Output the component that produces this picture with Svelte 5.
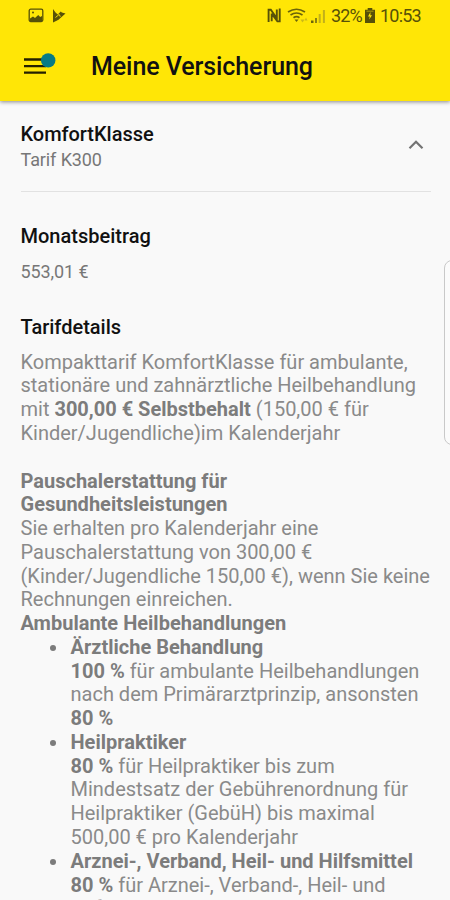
<script>
  const items = [
    { title: 'Ärztliche Behandlung', rate: '100 %', lines: [' für ambulante Heilbehandlungen', 'nach dem Primärarztprinzip, ansonsten'], end: '80 %' },
    { title: 'Heilpraktiker', rate: '80 %', lines: [' für Heilpraktiker bis zum', 'Mindestsatz der Gebührenordnung für', 'Heilpraktiker (GebüH) bis maximal', '500,00 € pro Kalenderjahr'] },
    { title: 'Arznei-, Verband, Heil- und Hilfsmittel', rate: '80 %', lines: [' für Arznei-, Verband-, Heil- und', 'Hilfsmittel bis'] }
  ];
</script>

<div class="screen">
  <header>
    <div class="status">
      <svg class="left" width="42" height="18" viewBox="0 0 42 18">
        <rect x="2.2" y="2.2" width="13.6" height="12.4" rx="1.5" fill="none" stroke="#575108" stroke-width="1.3" />
        <path d="M3 11.500l3-2 2 1.500 3.200-3 2 2 1.800-1v5.500H3z" fill="#575108" /><circle cx="6" cy="5.500" r="1" fill="#575108" />
        <path d="M26 2l2.500 3.400 2.300 2 3-2.800 1 1 3.700.9-7 6.300-5.500 2.600z" fill="#575108" />
        <path d="M28.500 10.500l3-2.500 2 1.500M31.500 7l1.500 1.500" stroke="#ffe606" stroke-width=".9" fill="none" />
      </svg>
      <div class="right">
        <svg width="62" height="18" viewBox="0 0 62 18">
          <path d="M2.600 15V2.800h2.200l6 8.400V2.500M5.700 6.500v7.700M5.700 6.800l5.700 7.600h2.300V1.500" fill="none" stroke="#575108" stroke-width="1.900" />
          <g fill="none" stroke="#6b640a" stroke-width="1.700"><path d="M22 5q8.500-5.500 17 0M24.500 8q6-4 12 0M27.500 10.800q3-2.200 6 0" /></g>
          <path d="M28.500 12.500h4L30.500 15z" fill="#6b640a" />
          <path d="M34.500 12.500l2 3 2-3zM38.500 13.500l1.500-3 1.500 3z" fill="#cbb918" />
          <path d="M45 16v-2.500h2.500V16z" fill="#6b640a" /><path d="M52.700 16V7h2v9zM56.900 16V3h2v13z" fill="#c2b01a" />
          <path d="M49 16v-5h2v5z" fill="#8d8210" />
        </svg>
        <span class="pct">32%</span>
        <svg class="bat" width="12" height="17" viewBox="0 0 12 17"><path d="M3.700 1h4.600v1.800H11V16H1V2.800h2.700z" fill="#575108" /><path d="M6.500 5L4 9.500h1.800l-.6 3 2.800-4.200H6.300z" fill="#ffe606" /><path d="M2.500 4.200h7" stroke="#a99c0c" /></svg>
        <span class="time">10:53</span>
      </div>
    </div>
    <div class="bar">
      <svg width="36" height="28" viewBox="0 0 36 28">
        <path d="M1 7.500h22M1 14.200h22M1 20.700h22" stroke="#242100" stroke-width="2.300" />
        <circle cx="25.200" cy="8.400" r="7.200" fill="#087b85" />
      </svg>
      <h1>Meine Versicherung</h1>
    </div>
  </header>

  <main>
    <section class="tariff">
      <div><h2 class="name">KomfortKlasse</h2><p class="sub">Tarif K300</p></div>
      <svg width="18" height="12" viewBox="0 0 18 12"><path d="M2.500 9.300L9 2.800l6.500 6.500" fill="none" stroke="#747474" stroke-width="2.200" /></svg>
    </section>
    <h2 class="month">Monatsbeitrag</h2>
    <p class="price">553,01 €</p>
    <h2 class="det">Tarifdetails</h2>
    <div class="body">
      <p>Kompakttarif KomfortKlasse für ambulante,<br />stationäre und zahnärztliche Heilbehandlung<br />mit <b>300,00 € Selbstbehalt</b> (150,00 € für<br />Kinder/Jugendliche)im Kalenderjahr</p>
      <p class="gap"><b>Pauschalerstattung für<br />Gesundheitsleistungen</b><br />Sie erhalten pro Kalenderjahr eine<br />Pauschalerstattung von 300,00 €<br />(Kinder/Jugendliche 150,00 €), wenn Sie keine<br />Rechnungen einreichen.<br /><b>Ambulante Heilbehandlungen</b></p>
      <ul>
        {#each items as item}
          <li><b>{item.title}</b><br /><b>{item.rate}</b>{#each item.lines as line, i}{#if i > 0}<br />{/if}{line}{/each}{#if item.end}<br /><b>{item.end}</b>{/if}</li>
        {/each}
      </ul>
    </div>
  </main>
  <aside></aside>
</div>

<style>
  :global(body) { background: #f9f9f9; overflow: hidden; }
  .screen { position: relative; width: 450px; height: 900px; overflow: hidden; background: #f9f9f9; font-family: Roboto, sans-serif; color: #111; }
  h1, h2, p, ul { margin: 0; padding: 0; }
  header { height: 101px; background: #ffe606; box-shadow: 0 1px 4px rgba(0, 0, 0, .45); }
  .status { display: flex; justify-content: space-between; height: 32px; padding: 7px 29px 0 27px; box-sizing: border-box; }
  .right { display: flex; height: 18px; color: #575108; font-size: 18px; line-height: 18px; }
  .pct { margin-left: 3px; width: 32px; letter-spacing: -.9px; }
  .bat { margin-left: 1px; }
  .time { margin-left: 4px; width: 41px; letter-spacing: -.8px; }
  .bar { display: flex; align-items: center; height: 69px; padding-left: 23px; }
  .bar svg { margin-top: -2px; }
  h1 { margin-left: 32px; font-size: 25px; line-height: 30px; font-weight: 500; letter-spacing: -.08px; white-space: nowrap; }
  main { padding: 0 19px 0 20.500px; }
  .tariff { display: flex; justify-content: space-between; height: 91px; padding-top: 21px; box-sizing: border-box; border-bottom: 1px solid #e2e2e2; }
  .tariff svg { margin: 17px 6px 0 0; }
  h2 { font-size: 20px; line-height: 24px; font-weight: 500; white-space: nowrap; }
  .name { letter-spacing: -.04px; }
  .sub, .price { font-size: 18px; line-height: 24px; color: #777; letter-spacing: -.1px; }
  .sub { margin-top: 2px; }
  .month { margin-top: 32px; }
  .price { margin-top: 12px; }
  .det { margin-top: 31px; }
  .body { margin-top: 11.700px; font-size: 20px; line-height: 23.770px; color: #8a8a8a; white-space: nowrap; }
  .body b { font-weight: 700; color: #7c7c7c; }
  .gap { margin-top: 23.770px; }
  ul { list-style: none; }
  li { position: relative; padding-left: 50px; }
  li::before { content: ''; position: absolute; left: 29px; top: 9px; width: 6px; height: 6px; border-radius: 50%; background: #7c7c7c; }
  aside { position: absolute; left: 444px; top: 260px; width: 20px; height: 185px; box-sizing: border-box; border: 1px solid #c9c9c9; border-radius: 8px; background: #fbfbfb; }
</style>
